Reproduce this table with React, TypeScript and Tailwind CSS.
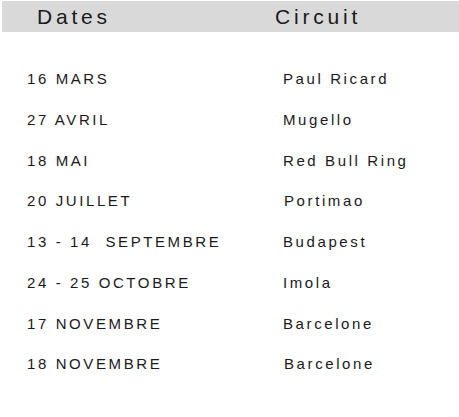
const races = [
  { date: "16 MARS", circuit: "Paul Ricard" },
  { date: "27 AVRIL", circuit: "Mugello" },
  { date: "18 MAI", circuit: "Red Bull Ring" },
  { date: "20 JUILLET", circuit: "Portimao", shift: true },
  { date: "13 - 14  SEPTEMBRE", circuit: "Budapest" },
  { date: "24 - 25 OCTOBRE", circuit: "Imola" },
  { date: "17 NOVEMBRE", circuit: "Barcelone" },
  { date: "18 NOVEMBRE", circuit: "Barcelone", shift: true },
];

export default function App() {
  return (
    <div className="h-[417px] w-[459px] bg-white font-['Liberation_Sans',Arial,sans-serif] text-[#1a1a1a]">
      <div className="pt-px pl-[2px]">
        <div className="flex h-[31px] items-center bg-[#d9d9d9] text-[21px] tracking-[3.8px]">
          <span className="w-[273px] pl-[35px]">Dates</span>
          <span>Circuit</span>
        </div>
      </div>

      <ul className="mt-[27px]">
        {races.map((r, i) => (
          <li
            key={i}
            className="flex h-[40.75px] items-center text-[15px] tracking-[2.6px]"
          >
            <span className="w-[283px] whitespace-pre pl-[27px]">{r.date}</span>
            <span className={r.shift ? "pl-px" : ""}>{r.circuit}</span>
          </li>
        ))}
      </ul>
    </div>
  );
}
